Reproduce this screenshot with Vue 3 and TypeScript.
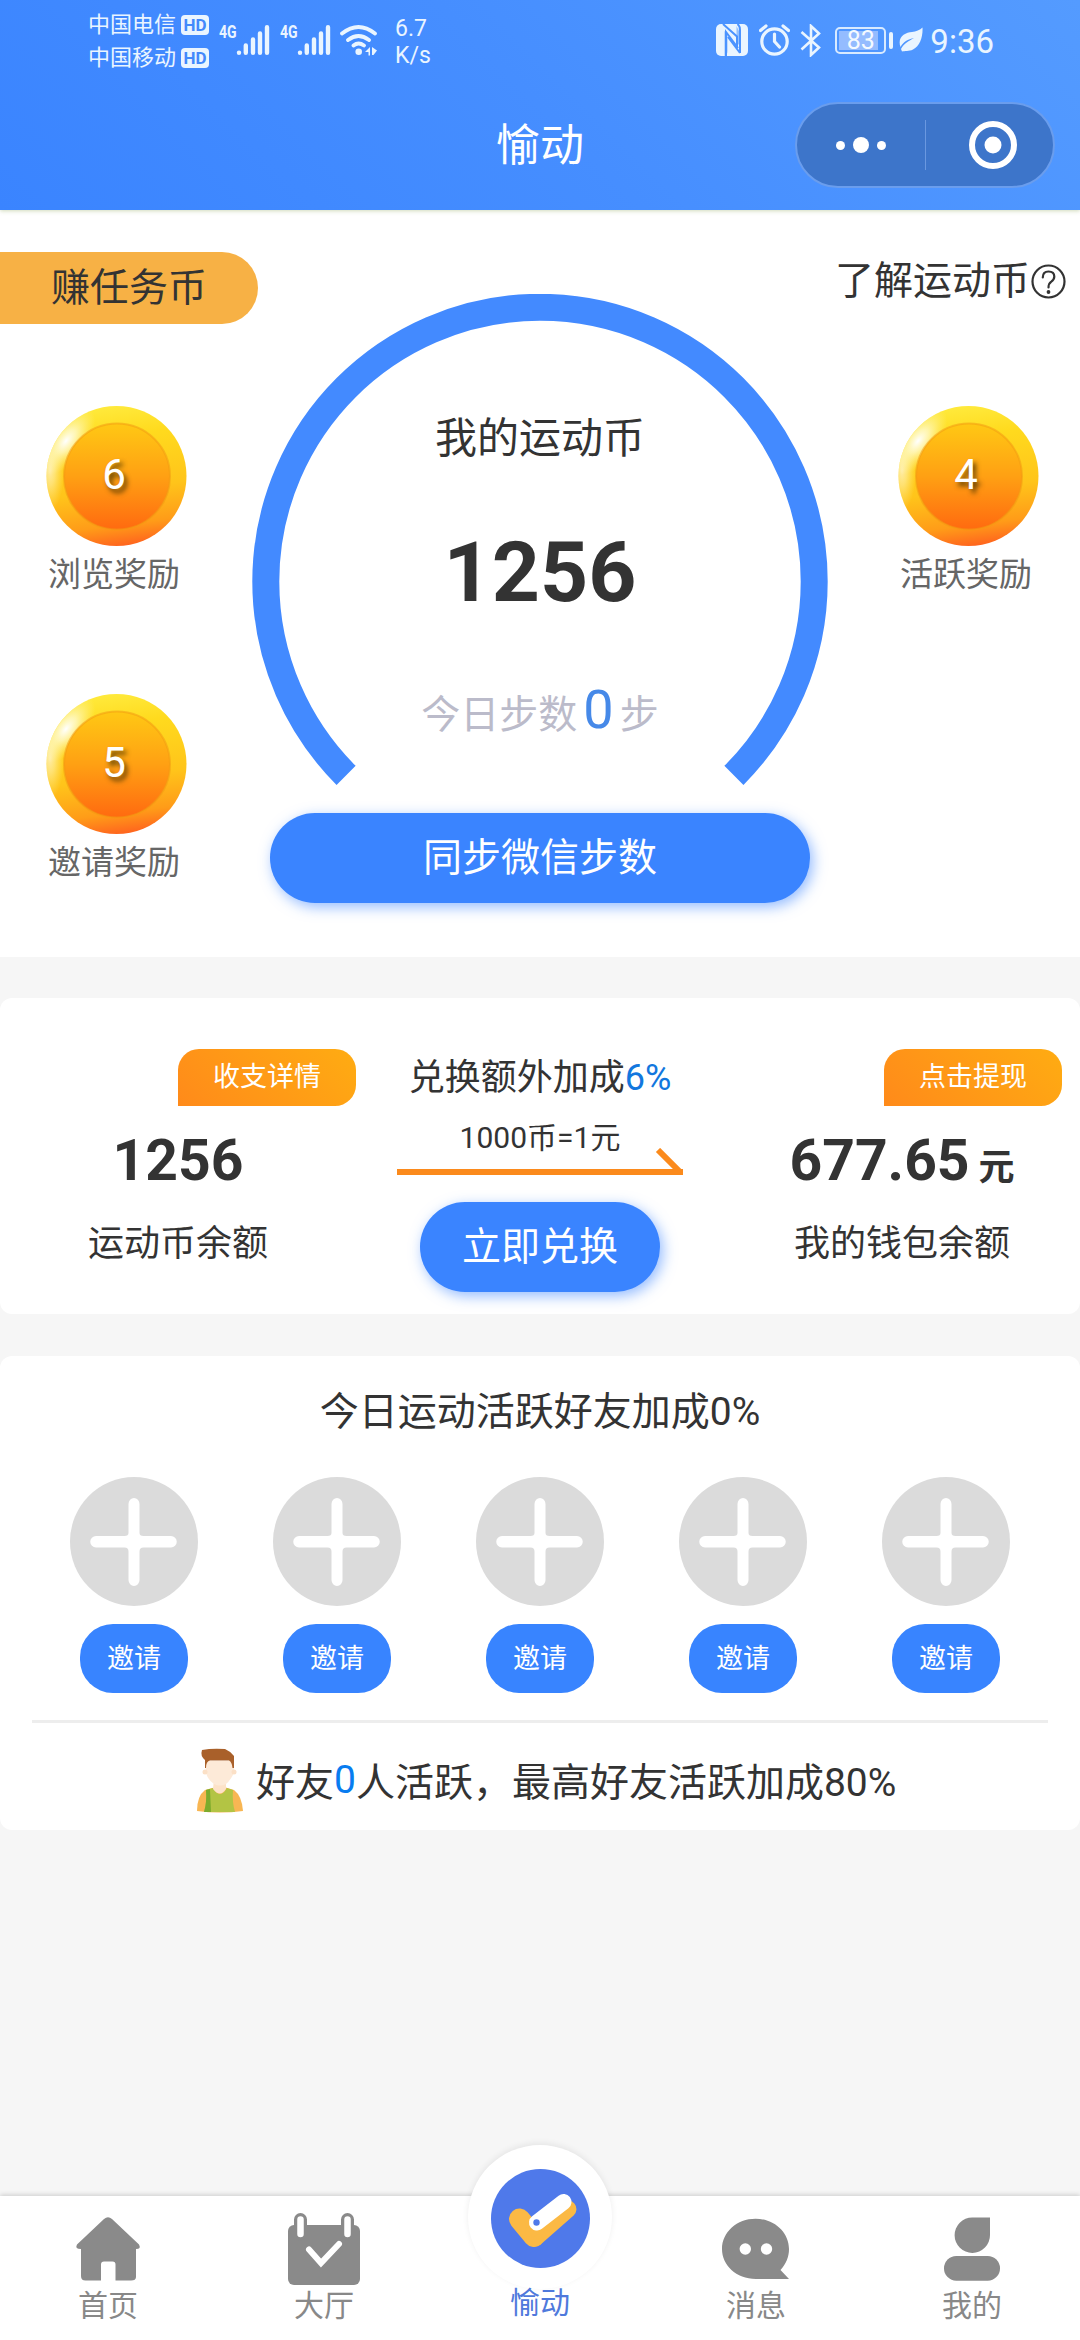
<script setup lang="ts">
interface Tab {
  key: string
  label: string
}

const tabs: Tab[] = [
  { key: 'home', label: '首页' },
  { key: 'hall', label: '大厅' },
  { key: 'sport', label: '愉动' },
  { key: 'message', label: '消息' },
  { key: 'mine', label: '我的' },
]

const leftCoins = [
  { amount: 6, label: '浏览奖励' },
  { amount: 5, label: '邀请奖励' },
]
const rightCoins = [{ amount: 4, label: '活跃奖励' }]
const balance = 1256
const wallet = '677.65'
const steps = 0
const friendSlots = 5
</script>

<template>
  <div class="page">
    <header class="header">
      <div class="status">
        <div class="carriers">
          <div class="carrier"><span>中国电信</span><b>HD</b></div>
          <div class="carrier"><span>中国移动</span><b>HD</b></div>
        </div>
        <div v-for="n in 2" :key="n" class="cell">
          <span class="gen">4G</span>
          <svg width="34" height="32" viewBox="236 24 34 32" stroke="#eaf5ff" stroke-width="4.4" stroke-linecap="round">
            <path d="M239 52.6v.2M245.8 45.5v7.3M253 39.5v13.3M260 33.5v19.3M267 27.2v25.6" />
          </svg>
        </div>
        <svg class="wifi" width="38" height="32" viewBox="339 24 38 32" fill="none" stroke="#eaf5ff" stroke-width="3.8" stroke-linecap="round">
          <path d="M341 33.5Q357.5 20.5 374 33.5M347 40Q357.5 32 368 40M352.5 45.5Q357.5 41.5 363 45.5" />
          <circle cx="357.7" cy="51.8" r="3.3" fill="#eaf5ff" stroke="none" />
          <path d="M364 52l5-5v8.5h-1.5V52zM371 47l5 3.5-3.500 4.500H371z" fill="#eaf5ff" stroke="none" />
        </svg>
        <div class="speed"><span>6.7</span><span>K/s</span></div>
        <div class="status-right">
          <svg width="32" height="32" viewBox="0 0 32 32">
            <rect width="32" height="32" rx="5" fill="#eaf5ff" />
            <path fill="none" stroke="#4b93ff" stroke-width="2" d="M7 0L21 12.500V24M10 32V8L22 24M12 13L24 29M21.500 0Q24 2 24 6V29" />
            <path fill="#4b93ff" d="M8.500 7L11.500 11V27Q11.500 31 8.500 32ZM20.500 2L23 7V21L20.500 18Z" opacity=".55" />
          </svg>
          <svg class="alarm" width="31" height="32" viewBox="0 0 31 32" fill="none" stroke="#eaf5ff" stroke-width="3.2">
            <circle cx="15.5" cy="17.5" r="12.7" />
            <path d="M15.5 10v7.500l5 5.500M1.500 6.500l5.500-4.500M24 2l5.500 4.500" stroke-linecap="round" />
          </svg>
          <svg class="bt" width="22" height="33" viewBox="0 0 22 33" fill="none" stroke="#eaf5ff" stroke-width="2.6">
            <path d="M1.500 8L19 23.500 11 31V2l8 7.500L1.500 25.500" />
          </svg>
          <div class="battery"><i></i><span>83</span></div>
          <svg class="leaf" width="24" height="25" viewBox="0 0 24 25">
            <path fill="#eaf5ff" d="M23.500 0.500C24 10 21 19 14 22.500C10 24.500 5.500 23.800 3 24.500L2 22C5 16 10 14 15 11C9 12 4 15 1.500 20C-2 10 6 5.500 13 5C17 4.500 21 3 23.500 0.500Z" />
          </svg>
          <span class="clock">9:36</span>
        </div>
      </div>
      <div class="titlebar">
        <h1>愉动</h1>
        <div class="capsule">
          <div class="dots"><i></i><i class="big"></i><i></i></div>
          <div class="target"><svg width="48" height="48" viewBox="0 0 48 48"><circle cx="24" cy="24" r="21" fill="none" stroke="#fff" stroke-width="6" /><circle cx="24" cy="24" r="8.5" fill="#fff" /></svg></div>
        </div>
      </div>
    </header>

    <svg width="0" height="0" class="defs" aria-hidden="true">
      <defs>
        <linearGradient id="rim" x1=".42" y1="0" x2=".55" y2="1">
          <stop offset="0" stop-color="#ffea3c" />
          <stop offset=".22" stop-color="#ffda1e" />
          <stop offset=".6" stop-color="#ffc41a" />
          <stop offset=".85" stop-color="#ff9c18" />
          <stop offset="1" stop-color="#ff641e" />
        </linearGradient>
        <linearGradient id="face" x1="0" y1="0" x2="0" y2="1">
          <stop offset="0" stop-color="#ffc814" />
          <stop offset=".5" stop-color="#ffa013" />
          <stop offset="1" stop-color="#ff6a10" />
        </linearGradient>
        <radialGradient id="shine">
          <stop offset="0" stop-color="#fff" />
          <stop offset=".35" stop-color="#fffbd0" stop-opacity=".8" />
          <stop offset="1" stop-color="#fff59a" stop-opacity="0" />
        </radialGradient>
        <clipPath id="coinclip"><circle cx="70.5" cy="71" r="70" /></clipPath>
      </defs>
    </svg>

    <section class="hero">
      <div class="side">
        <a class="earn">赚任务币</a>
        <div v-for="coin in leftCoins" :key="coin.label" class="reward">
          <div class="coin">
            <svg width="141" height="142" viewBox="0 0 141 142">
              <circle cx="70.5" cy="71" r="70" fill="url(#rim)" />
              <g clip-path="url(#coinclip)">
                <ellipse cx="20" cy="36" rx="20" ry="40" fill="url(#shine)" transform="rotate(38 20 36)" />
                <ellipse cx="4" cy="66" rx="14" ry="40" fill="url(#shine)" opacity=".6" />
              </g>
              <circle cx="71" cy="71.5" r="53" fill="url(#face)" stroke="#f39a12" stroke-opacity=".55" stroke-width="2" />
            </svg>
            <span>{{ coin.amount }}</span>
          </div>
          <p>{{ coin.label }}</p>
        </div>
      </div>

      <div class="center">
        <div class="dial">
          <svg width="576" height="519" viewBox="0 0 576 519" fill="none">
            <path d="M94.1 481.4A274.2 274.2 0 1 1 481.9 481.4" stroke="#438aff" stroke-width="27" />
          </svg>
          <div class="dial-text">
            <p class="dial-title">我的运动币</p>
            <p class="dial-value">{{ balance }}</p>
            <p class="dial-steps"><span>今日步数</span><em>{{ steps }}</em><span>步</span></p>
          </div>
        </div>
        <button class="primary sync">同步微信步数</button>
      </div>

      <div class="side">
        <a class="about">了解运动币<svg width="35" height="35" viewBox="0 0 35 35" fill="none" stroke="#333" stroke-width="2.2"><circle cx="17.5" cy="17.5" r="16" /><path d="M11.800 13.500Q11.800 7.500 17.500 7.500Q23.300 7.500 23.300 12.500Q23.300 15.400 20.300 17.600Q17.500 19.500 17.500 23.500" stroke-linecap="round" /><circle cx="17.5" cy="28" r="1.900" fill="#333" stroke="none" /></svg></a>
        <div v-for="coin in rightCoins" :key="coin.label" class="reward">
          <div class="coin">
            <svg width="141" height="142" viewBox="0 0 141 142">
              <circle cx="70.5" cy="71" r="70" fill="url(#rim)" />
              <g clip-path="url(#coinclip)">
                <ellipse cx="20" cy="36" rx="20" ry="40" fill="url(#shine)" transform="rotate(38 20 36)" />
                <ellipse cx="4" cy="66" rx="14" ry="40" fill="url(#shine)" opacity=".6" />
              </g>
              <circle cx="71" cy="71.5" r="53" fill="url(#face)" stroke="#f39a12" stroke-opacity=".55" stroke-width="2" />
            </svg>
            <span>{{ coin.amount }}</span>
          </div>
          <p>{{ coin.label }}</p>
        </div>
      </div>
    </section>

    <section class="card exchange">
      <div class="account">
        <a class="tag">收支详情</a>
        <p class="amount">{{ balance }}</p>
        <p class="caption">运动币余额</p>
      </div>
      <div class="rate">
        <p class="bonus">兑换额外加成<em>6%</em></p>
        <p class="ratio">1000币=1元</p>
        <svg class="arrow" width="286" height="28" viewBox="0 0 286 28">
          <path d="M0 24H286M261 2L284 25" fill="none" stroke="#fb8a1c" stroke-width="6" />
        </svg>
        <button class="primary redeem">立即兑换</button>
      </div>
      <div class="account wallet">
        <a class="tag">点击提现</a>
        <p class="amount">{{ wallet }}<small> 元</small></p>
        <p class="caption">我的钱包余额</p>
      </div>
    </section>

    <section class="card friends">
      <h2>今日运动活跃好友加成0%</h2>
      <div class="slots">
        <div v-for="n in friendSlots" :key="n" class="slot">
          <svg width="128" height="129" viewBox="0 0 128 129">
            <ellipse cx="64" cy="64.5" rx="64" ry="64.5" fill="#dbdbdb" />
            <path fill="#fff" d="M58.500 27a5.500 6 0 0 1 11 0V56q0 3 4 3H101a5.500 5.500 0 0 1 0 11.500H73.500q-4 0-4 4V103a5.500 6 0 0 1-11 0V74.500q0-4-4-4H26a5.500 5.500 0 0 1 0-11.500H54.500q4 0 4-3Z" />
          </svg>
          <button>邀请</button>
        </div>
      </div>
      <hr />
      <div class="summary">
        <svg width="48" height="65" viewBox="0 0 48 65">
          <path d="M1 63Q1 48 9 42L20 39H28L38 42Q46 48 47 63Q24 66 1 63Z" fill="#f8b653" />
          <path d="M10 42L17 40Q24 52 31 40L37 42Q36 54 39 64H8Q11 54 10 42Z" fill="#b3c444" />
          <path d="M10 42L14 41L15 64H8Q11 54 10 42Z" fill="#7cab2c" />
          <path d="M18 32H30V41Q24 50 17 41Z" fill="#fde2c8" />
          <path d="M9 13H38V25Q34 33 30 36Q24 39 18 36Q12 32 10 25Z" fill="#fdead8" />
          <circle cx="9" cy="24" r="2.5" fill="#fbe0c6" /><circle cx="38" cy="24" r="2.5" fill="#fbe0c6" />
          <path d="M6 2Q16 0 29 1Q34 3 38 8V20H36.500Q36 14 33 12.500H14Q10 13 10 20H9V12Q4 8 6 2Z" fill="#a9602a" />
        </svg>
        <p>好友<em>0</em>人活跃，最高好友活跃加成80%</p>
      </div>
    </section>

    <nav class="tabs">
      <a v-for="tab in tabs" :key="tab.key" :class="['tab', tab.key]">
        <svg v-if="tab.key === 'home'" width="72" height="72" viewBox="72 2213 72 72" fill="#8a8a8a">
          <path d="M104 2219Q108 2215.500 112 2219L139 2244.500Q141.500 2249 136 2249V2277Q136 2280.500 131 2280.500H115.500V2264.500Q115.500 2261.500 112.500 2261.500H104Q101 2261.500 101 2264.500V2280.500H85.500Q81 2280.500 81 2276V2249Q74.500 2249 77 2244.500Z" />
        </svg>
        <svg v-else-if="tab.key === 'hall'" width="72" height="72" viewBox="0 0 72 72">
          <rect x="0" y="12" width="72" height="60" rx="6" fill="#8a8a8a" />
          <path d="M12.500 21V6.500M59.500 21V6.500" fill="none" stroke="#8a8a8a" stroke-width="13" stroke-linecap="round" />
          <path d="M12.500 21V6.500M59.500 21V6.500" fill="none" stroke="#fff" stroke-width="6.5" stroke-linecap="round" />
          <path d="M21 36.500L33 50L51 31" fill="none" stroke="#fff" stroke-width="6" stroke-linecap="round" />
        </svg>
        <span v-else-if="tab.key === 'sport'" class="bubble">
          <svg width="99" height="99" viewBox="0 0 99 99">
            <circle cx="49.5" cy="49.5" r="49.5" fill="#4f79ea" />
            <g fill="none" stroke-linecap="round" stroke-linejoin="round">
              <path d="M28.500 50L43 67.500" stroke="#fbb944" stroke-width="21" />
              <path d="M44 69L77 40" stroke="#fbb944" stroke-width="17" />
              <path d="M40 62L60 48" stroke="#fbb944" stroke-width="12" />
              <path d="M46 53.500L72.500 33" stroke="#fff" stroke-width="16" />
            </g>
            <circle cx="45.5" cy="53.5" r="3.2" fill="#4f79ea" />
          </svg>
        </span>
        <svg v-else-if="tab.key === 'message'" width="72" height="72" viewBox="720 2213 72 72">
          <path fill="#8a8a8a" d="M789 2279H756C736 2279 722 2265 722 2249C722 2232 737 2218.700 755.500 2218.700C774 2218.700 789 2232 789 2249C789 2257 786 2264 780.500 2270Z" />
          <circle cx="745.3" cy="2249" r="5.7" fill="#fff" /><circle cx="766.5" cy="2249" r="5.7" fill="#fff" />
        </svg>
        <svg v-else width="72" height="72" viewBox="936 2213 72 72" fill="#8a8a8a">
          <path d="M990 2217.500V2235A17.700 17.700 0 1 1 972.300 2217.500Z" />
          <rect x="944" y="2256" width="56" height="24.700" rx="12.300" />
        </svg>
        <span class="tab-label">{{ tab.label }}</span>
      </a>
    </nav>
  </div>
</template>

<style>
body {
  background: #f6f6f6;
}
</style>

<style scoped>
.page {
  box-sizing: border-box;
  width: 1080px;
  height: 2340px;
  display: flex;
  flex-direction: column;
  background: #f6f6f6;
  color: #333;
  font-family: Roboto, "Noto Sans CJK SC", sans-serif;
  overflow: hidden;
}
p,
h1,
h2 {
  margin: 0;
  font-weight: 400;
}
em {
  font-style: normal;
}
button {
  border: 0;
  padding: 0;
  font-family: inherit;
  color: #fff;
}
svg {
  display: block;
  flex: none;
}
.defs {
  position: absolute;
}

/* header */
.header {
  height: 210px;
  flex: none;
  position: relative;
  background: linear-gradient(45deg, #3a84ff 0%, #468eff 50%, #549bff 100%);
  box-shadow: 0 1px 4px rgba(120, 150, 60, 0.35);
}
.status {
  height: 81px;
  padding: 0 86px 0 88px;
  display: flex;
  color: #eaf5ff;
}
.carriers {
  width: 122px;
  padding-top: 8px;
  margin-right: 9px;
}
.carrier {
  display: flex;
  align-items: center;
  height: 33px;
  font-size: 22px;
  line-height: 33px;
}
.carrier b {
  width: 28px;
  height: 20px;
  margin: 0 0 0 5px;
  border-radius: 4px;
  background: #eaf5ff;
  color: #4389fb;
  font-size: 17px;
  line-height: 20px;
  text-align: center;
}
.cell {
  display: flex;
  width: 51px;
  margin-right: 10px;
  padding-top: 24px;
}
.gen {
  width: 17px;
  font-size: 18px;
  line-height: 16px;
  font-weight: 700;
  transform: scaleX(0.78);
  transform-origin: 0 0;
}
.wifi {
  margin: 24px 17px 0 -1px;
}
.speed {
  display: flex;
  flex-direction: column;
  padding-top: 15px;
  font-size: 23px;
  line-height: 27px;
}
.status-right {
  margin-left: auto;
  display: flex;
  padding-top: 24px;
}
.alarm {
  margin-left: 11px;
}
.bt {
  margin-left: 10px;
}
.battery {
  box-sizing: border-box;
  position: relative;
  width: 51px;
  height: 27px;
  margin: 3px 0 0 13px;
  border: 2px solid #d8eaff;
  border-radius: 5px;
  background: linear-gradient(#94bcff, #94bcff) 2px 2px / 39px 19px no-repeat;
  font-size: 25px;
  line-height: 24px;
  text-align: center;
  color: #f4faff;
}
.battery i {
  position: absolute;
  right: -9px;
  top: 3px;
  width: 4px;
  height: 17px;
  border-radius: 2px;
  background: #eaf5ff;
}
.leaf {
  margin: 3px 0 0 13px;
}
.clock {
  margin-left: 7px;
  font-size: 33px;
  line-height: 35px;
}
.titlebar {
  display: flex;
  justify-content: flex-end;
  padding: 21px 25px 0 0;
  position: relative;
}
.titlebar h1 {
  position: absolute;
  left: 0;
  width: 1080px;
  top: 35px;
  font-size: 44px;
  line-height: 60px;
  text-align: center;
  color: #fff;
}
.capsule {
  box-sizing: border-box;
  width: 260px;
  height: 86px;
  border: 2px solid #6a9ded;
  border-radius: 43px;
  background: #3d75ca;
  display: flex;
  align-items: center;
}
.dots {
  width: 128px;
  height: 50px;
  border-right: 1px solid #6a98e0;
  display: flex;
  align-items: center;
  justify-content: center;
  gap: 8px;
}
.dots i {
  width: 9px;
  height: 9px;
  border-radius: 50%;
  background: #fff;
}
.dots .big {
  width: 16px;
  height: 16px;
}
.target {
  margin-left: 43px;
}

/* hero */
.hero {
  height: 747px;
  flex: none;
  background: #fff;
  display: grid;
  grid-template-columns: 228px 624px 228px;
}
.side {
  padding-top: 42px;
  display: flex;
  flex-direction: column;
}
.earn {
  box-sizing: border-box;
  width: 258px;
  height: 72px;
  padding-left: 51px;
  margin-bottom: 81px;
  border-radius: 0 36px 36px 0;
  background: #f7b145;
  font-size: 39px;
  line-height: 72px;
}
.about {
  align-self: flex-end;
  display: flex;
  align-items: center;
  height: 60px;
  margin: -1px 14px 94px 0;
  font-size: 39px;
  line-height: 58px;
  white-space: nowrap;
}
.about svg {
  margin-left: 1px;
}
.reward {
  margin-bottom: 94px;
  text-align: center;
}
.coin {
  position: relative;
  height: 142px;
}
.coin svg {
  margin-left: 46px;
}
.coin span {
  position: absolute;
  left: 0;
  width: 228px;
  top: 40px;
  font-size: 42px;
  line-height: 60px;
  color: #fff;
  text-shadow: 3px 4px 5px rgba(70, 50, 0, 0.85);
}
.reward p {
  height: 52px;
  font-size: 33px;
  line-height: 56px;
  color: #666;
}
.center {
  padding-top: 84px;
  display: flex;
  flex-direction: column;
  align-items: center;
}
.dial {
  display: grid;
  height: 519px;
}
.dial > * {
  grid-area: 1 / 1;
}
.dial-text {
  padding-top: 115px;
  text-align: center;
}
.dial-title {
  font-size: 42px;
  line-height: 60px;
}
.dial-value {
  margin-top: 54px;
  font-size: 84px;
  font-weight: 700;
  line-height: 100px;
}
.dial-steps {
  margin-top: 57px;
  display: flex;
  justify-content: center;
  align-items: baseline;
  font-size: 39px;
  line-height: 60px;
  color: #bbbbca;
}
.dial-steps em {
  margin: 0 6px;
  font-size: 54px;
  color: #4689e8;
}
.primary {
  height: 90px;
  border-radius: 45px;
  background: #3a84ff;
  font-size: 39px;
  line-height: 88px;
  box-shadow: 3px 4px 14px rgba(58, 132, 255, 0.55);
}
.sync {
  width: 540px;
}

/* cards */
.card {
  flex: none;
  margin-top: 41px;
  border-radius: 12px;
  background: #fff;
}
.exchange {
  height: 316px;
  display: grid;
  grid-template-columns: 356px 368px 356px;
  text-align: center;
}
.account {
  padding-top: 51px;
}
.tag {
  display: block;
  width: 178px;
  height: 57px;
  margin-left: 178px;
  border-radius: 21px 21px 21px 0;
  background: linear-gradient(45deg, #ff8a1a, #ffac12);
  color: #fff;
  font-size: 27px;
  line-height: 56px;
}
.wallet .tag {
  margin-left: 160px;
}
.amount {
  height: 70px;
  margin-top: 20px;
  font-size: 57px;
  font-weight: 700;
  line-height: 70px;
}
.amount small {
  font-size: 36px;
  line-height: 1;
}
.caption {
  margin-top: 23px;
  font-size: 36px;
  line-height: 50px;
}
.rate {
  display: flex;
  flex-direction: column;
  align-items: center;
  padding-top: 55px;
}
.bonus {
  font-size: 36px;
  line-height: 50px;
}
.bonus em {
  color: #1277de;
}
.ratio {
  margin-top: 15px;
  font-size: 30px;
  line-height: 40px;
}
.arrow {
  margin-top: -10px;
}
.redeem {
  width: 240px;
  margin-top: 26px;
  line-height: 87px;
}

.friends {
  height: 474px;
  margin-top: 42px;
}
.friends h2 {
  padding-top: 26px;
  font-size: 39px;
  line-height: 60px;
  text-align: center;
}
.slots {
  display: grid;
  grid-template-columns: repeat(5, 203px);
  justify-content: center;
  margin-top: 35px;
}
.slot {
  display: flex;
  flex-direction: column;
  align-items: center;
  gap: 18px;
}
.slot button {
  width: 108px;
  height: 69px;
  border-radius: 33px;
  background: #3884ff;
  font-size: 27px;
  line-height: 66px;
}
.friends hr {
  height: 3px;
  margin: 27px 32px 0;
  border: 0;
  background: #ededed;
}
.summary {
  display: flex;
  padding: 25px 0 0 196px;
}
.summary p {
  margin-left: 12px;
  padding-top: 5px;
  font-size: 39px;
  line-height: 60px;
  white-space: nowrap;
}
.summary em {
  position: relative;
  top: -3px;
  color: #087cf0;
}

/* tab bar */
.tabs {
  position: relative;
  flex: none;
  height: 144px;
  margin-top: auto;
  display: grid;
  grid-template-columns: repeat(5, 216px);
  background: #fff;
  box-shadow: 0 -1px 5px rgba(0, 0, 0, 0.18);
}
.tab {
  display: flex;
  flex-direction: column;
  align-items: center;
  padding-top: 17px;
  color: #888;
}
.tab-label {
  margin-top: 1px;
  font-size: 30px;
  line-height: 40px;
}
.sport {
  padding-top: 0;
  color: #4f79dc;
}
.sport .tab-label {
  margin-top: -6px;
  position: relative;
}
.bubble {
  display: flex;
  align-items: center;
  justify-content: center;
  box-sizing: border-box;
  width: 144px;
  height: 144px;
  padding-top: 3px;
  margin-top: -51px;
  border-radius: 50%;
  background: #fff;
  box-shadow: 0 -2px 6px rgba(0, 0, 0, 0.07);
}
</style>
